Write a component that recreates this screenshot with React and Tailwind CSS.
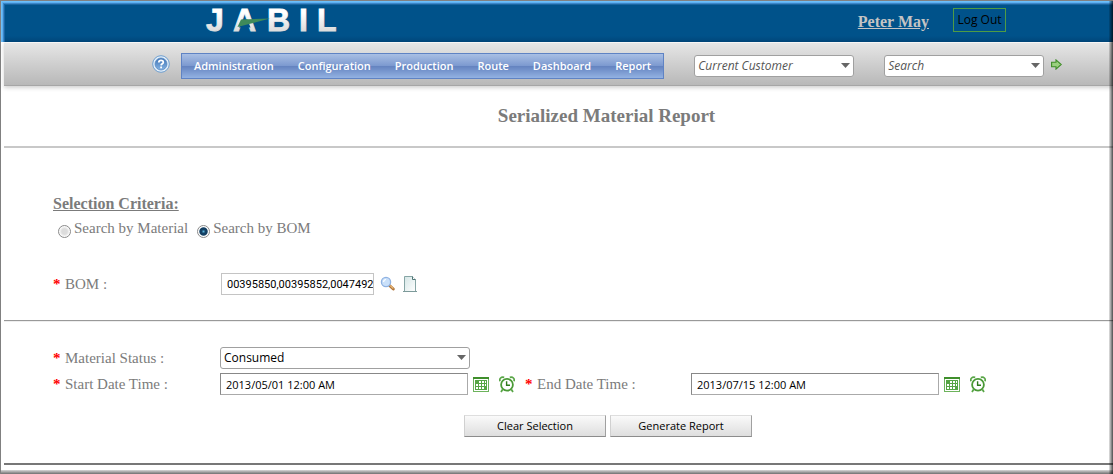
import React, { useState } from "react";

const ui = "font-['Open_Sans','Noto_Sans',sans-serif]";

const menu = ["Administration", "Configuration", "Production", "Route", "Dashboard", "Report"];

function Logo() {
  return (
    <svg width="138" height="32" viewBox="0 0 138 32" role="img" aria-label="Jabil">
      <defs>
        <linearGradient id="logoFill" gradientUnits="userSpaceOnUse" x1="0" y1="6" x2="0" y2="25">
          <stop offset="0" stopColor="#ffffff" />
          <stop offset="1" stopColor="#dadada" />
        </linearGradient>
      </defs>
      <text
        x="2 29 63 95 113"
        y="24"
        fill="url(#logoFill)"
        stroke="url(#logoFill)"
        strokeWidth="0.8"
        fontFamily="'Liberation Sans', sans-serif"
        fontWeight="700"
        fontSize="32"
      >
        JABIL
      </text>
      <path d="M38.5 12.5 L43.5 12.5 L46.5 20.5 L35 20.5 Z" fill="#00528a" />
      <path d="M37 12.5 L66 11.5 L33.5 20 Z" fill="#3f8a5a" />
    </svg>
  );
}

function HelpIcon() {
  return (
    <svg width="18" height="18" viewBox="0 0 18 18" aria-hidden="true">
      <defs>
        <linearGradient id="helpFill" x1="0" y1="0" x2="0" y2="1">
          <stop offset="0" stopColor="#3f73b5" />
          <stop offset="1" stopColor="#85b4e4" />
        </linearGradient>
      </defs>
      <circle cx="9" cy="9" r="8.3" fill="#e3effa" stroke="#6f9fd0" strokeWidth="1" />
      <circle cx="9" cy="9" r="6" fill="url(#helpFill)" stroke="#5b8ac2" strokeWidth="0.8" />
      <path d="M6.8 7.4 C6.8 4.6 11.3 4.7 11.3 7.2 C11.3 8.8 9.2 8.7 9.1 10.4" fill="none" stroke="#fff" strokeWidth="1.8" />
      <rect x="8.2" y="11.5" width="1.8" height="1.8" fill="#fff" />
    </svg>
  );
}

function SearchIcon() {
  return (
    <svg width="16" height="16" viewBox="0 0 16 16" aria-hidden="true">
      <path d="M9.5 9.5 L13.3 13" stroke="#b0763c" strokeWidth="3" strokeLinecap="round" />
      <path d="M10.5 9.8 L13 12.2" stroke="#e9b877" strokeWidth="1.2" strokeLinecap="round" />
      <circle cx="6" cy="6" r="4.6" fill="#c9e0fa" stroke="#8fb2e2" strokeWidth="1.3" />
      <path d="M3.6 6 A2.6 2.6 0 0 1 6 3.5" stroke="#fff" strokeWidth="1.2" fill="none" />
    </svg>
  );
}

function PageIcon() {
  return (
    <svg width="14" height="17" viewBox="0 0 14 17" aria-hidden="true">
      <defs>
        <linearGradient id="pageFill" x1="0" y1="0" x2="1" y2="1">
          <stop offset="0" stopColor="#d5e6e6" />
          <stop offset="1" stopColor="#ffffff" />
        </linearGradient>
      </defs>
      <path d="M1.5 0.5 H9.5 L12.5 3.5 V15.5 H1.5 Z" fill="url(#pageFill)" stroke="#86a5a5" />
      <path d="M9.5 0.5 V3.5 H12.5" fill="#fff" stroke="#4f7575" />
      <path d="M0 15.5 H14" stroke="#7d9a9a" />
    </svg>
  );
}

function CalendarIcon() {
  return (
    <svg width="16" height="15" viewBox="0 0 16 15" shapeRendering="crispEdges" aria-hidden="true">
      <rect x="0" y="0" width="16" height="15" fill="#6db35c" />
      <rect x="1" y="2" width="14" height="12" fill="#fff" />
      <rect x="0" y="0" width="16" height="2" fill="#3f8f2c" />
      <rect x="2" y="3" width="12" height="10" fill="#56a544" />
      {[
        [6, 4], [9, 4], [12, 4],
        [3, 7], [6, 7], [9, 7], [12, 7],
        [3, 10], [6, 10], [9, 10],
      ].map(([x, y]) => (
        <rect key={`${x}-${y}`} x={x} y={y} width={x === 12 ? 1 : 2} height="2" fill="#fff" />
      ))}
    </svg>
  );
}

function ClockIcon() {
  return (
    <svg width="16" height="17" viewBox="0 0 16 17" fill="none" aria-hidden="true">
      <path d="M1 5.3 C0.2 2.5 2 0.6 5.2 1.4" stroke="#5aa648" strokeWidth="1.7" />
      <path d="M15 5.3 C15.8 2.5 14 0.6 10.8 1.4" stroke="#5aa648" strokeWidth="1.7" />
      <path d="M3.6 13.6 L2 16 M12.4 13.6 L14 16" stroke="#5aa648" strokeWidth="1.8" />
      <circle cx="8" cy="8.8" r="5.9" fill="#fff" stroke="#4a9a36" strokeWidth="1.8" />
      <path d="M7.6 5.3 V9.3 H11" stroke="#2f7a1e" strokeWidth="1.4" />
    </svg>
  );
}

function GoIcon() {
  return (
    <svg width="11" height="11" viewBox="0 0 11 11" aria-hidden="true">
      <path d="M0.6 3.3 H5 V0.9 L10.2 5.5 L5 10.1 V7.7 H0.6 Z" fill="#9bd07f" stroke="#3d8c25" strokeWidth="1.1" />
    </svg>
  );
}

function Combo({ label, options, id, className, textClass }) {
  return (
    <div className={`relative h-[22px] ${className}`}>
      <select
        id={id}
        aria-label={label}
        className={`block h-full w-full appearance-none rounded-[3px] border border-[#a0a0a0] bg-white pl-[3px] pr-5 outline-none ${ui} ${textClass}`}
      >
        {options.map((o) => (
          <option key={o}>{o}</option>
        ))}
      </select>
      <svg className="pointer-events-none absolute right-1 top-2" width="9" height="5" viewBox="0 0 9 5" aria-hidden="true">
        <path d="M0 0 H9 L4.5 5 Z" fill="#666" />
      </svg>
    </div>
  );
}

function Label({ htmlFor, children, className }) {
  return (
    <label htmlFor={htmlFor} className={`flex shrink-0 gap-1 ${className}`}>
      <span className="w-2 font-bold text-[#ff0000]">*</span>
      {children}
    </label>
  );
}

function DateField({ id, label, value, className }) {
  return (
    <div className="flex items-center">
      <Label htmlFor={id} className={className}>{label}</Label>
      <input
        id={id}
        defaultValue={value}
        className={`h-[22px] w-[248px] border border-b-[#aaa] border-l-[#888] border-r-[#aaa] border-t-[#888] bg-white px-[5px] text-[11px] text-black outline-none ${ui}`}
      />
      <button type="button" aria-label={`${label} calendar`} className="ml-[5px] mt-px">
        <CalendarIcon />
      </button>
      <button type="button" aria-label={`${label} clock`} className="ml-[10px]">
        <ClockIcon />
      </button>
    </div>
  );
}

function Radio({ label, checked, onChange }) {
  return (
    <label className="flex items-center gap-[3px]">
      <input
        type="radio"
        name="mode"
        checked={checked}
        onChange={onChange}
        className="mt-1.5 h-[13px] w-[13px] appearance-none rounded-full border border-[#8a8a8a] bg-[radial-gradient(circle,#dcdcdc_0,#dcdcdc_35%,#fff_70%)] checked:bg-[radial-gradient(circle,#5ab4dc_0,#123f63_25%,#123f63_48%,#fff_60%)]"
      />
      {label}
    </label>
  );
}

const pushButton = `h-[22px] w-[142px] border border-b-[#8c8c8c] border-l-[#d0d0d0] border-r-[#a0a0a0] border-t-[#dedede] bg-linear-to-b from-[#fafafa] to-[#dedede] text-[11px] text-black ${ui}`;

export default function App() {
  const [mode, setMode] = useState("bom");

  return (
    <div className="relative flex min-h-screen flex-col border-l border-t border-[#808080] bg-white font-['Liberation_Serif',serif] text-[15px] leading-5 text-[#7b7b7b]">
      <header className="flex h-[41px] items-start bg-linear-to-b from-[#00528a] from-85% to-[#00467a] pl-[203px] pr-[107px] pt-1 shadow-[inset_1px_1px_0_#6cc0fa,inset_2px_2px_0_#5eb0f0,inset_3px_3px_0_#3a86c8,inset_4px_4px_0_#1a65a0]">
        <div className="mt-[2px]">
          <Logo />
        </div>
        <a href="#profile" className="ml-auto mt-[7px] text-[16px] font-bold text-[#c4c4c4] underline">Peter May</a>
        <button type="button" className={`ml-6 mt-[3px] h-6 w-[53px] border border-[#4f9b45] text-[12px] text-black ${ui}`}>
          Log Out
        </button>
      </header>

      <div className="ml-[3px] flex h-11 items-center border-b border-t border-b-[#a6a6a6] border-t-[#f6f6f6] bg-linear-to-b from-[#e6e6e6] to-[#b8b8b8] pl-[148px] shadow-[0_2px_4px_rgba(0,0,0,0.18)]">
        <button type="button" aria-label="Help">
          <HelpIcon />
        </button>
        <nav className={`ml-[11px] mt-1 flex h-[26px] items-center gap-6 border border-[#5f83c4] bg-[linear-gradient(#a9bfe4,#7d9ad0_48%,#6382bf_50%,#93b2e2)] px-3 text-[11px] font-semibold text-white ${ui}`}>
          {menu.map((m) => (
            <a key={m} href={`#${m.toLowerCase()}`}>{m}</a>
          ))}
        </nav>
        <Combo label="Current customer" options={["Current Customer"]} className="ml-[30px] mt-1 w-40" textClass="text-[12px] italic text-[#555]" />
        <Combo label="Search" options={["Search"]} className="ml-[30px] mt-1 w-40" textClass="text-[12px] italic text-[#555]" />
        <button type="button" aria-label="Go" className="ml-[7px]">
          <GoIcon />
        </button>
      </div>

      <main className="ml-[3px]">
        <h1 className="py-5 pl-24 text-center text-[19px] font-bold">Serialized Material Report</h1>
        <hr className="h-[2px] border-0 bg-[#c8c8c8]" />

        <section className="px-[49px] pb-[25px] pt-[46px]">
          <h2 className="text-[16px] font-bold underline">Selection Criteria:</h2>
          <div className="mt-1 flex gap-[9px] pl-[5px]">
            <Radio label="Search by Material" checked={mode === "material"} onChange={() => setMode("material")} />
            <Radio label="Search by BOM" checked={mode === "bom"} onChange={() => setMode("bom")} />
          </div>
          <div className="mt-[35px] flex items-center">
            <Label htmlFor="bom" className="w-[168px]">BOM :</Label>
            <input
              id="bom"
              defaultValue="00395850,00395852,00474920"
              className="h-[22px] w-[153px] border border-[#c4c4c4] bg-white pl-[5px] font-['Roboto',sans-serif] text-[11px] text-black outline-none"
            />
            <button type="button" aria-label="Find BOM" className="ml-[6px]">
              <SearchIcon />
            </button>
            <button type="button" aria-label="New list" className="ml-[7px]">
              <PageIcon />
            </button>
          </div>
        </section>

        <hr className="h-[2px] border-b border-t border-b-[#eee] border-t-[#999]" />

        <section className="px-[49px] pb-[26px] pt-[25px]">
          <div className="flex items-center">
            <Label htmlFor="status" className="w-[167px]">Material Status :</Label>
            <Combo id="status" label="Material Status" options={["Consumed"]} className="w-[250px]" textClass="text-[12px] text-black" />
          </div>
          <div className="mt-1 flex flex-wrap items-center gap-x-[10px]">
            <DateField id="start" label="Start Date Time :" value="2013/05/01 12:00 AM" className="w-[167px]" />
            <DateField id="end" label="End Date Time :" value="2013/07/15 12:00 AM" className="w-[166px]" />
          </div>
          <div className="mt-5 flex justify-center gap-1 pl-[99px]">
            <button type="button" className={pushButton}>Clear Selection</button>
            <button type="button" className={pushButton}>Generate Report</button>
          </div>
        </section>

        <hr className="h-[2px] border-0 bg-[#777]" />
      </main>

      <div className="mt-auto h-[4px] bg-linear-to-b from-[#d8d8d8] to-[#707070]" />
      <div className="pointer-events-none absolute inset-y-0 right-0 w-[4px] bg-linear-to-r from-black/10 to-black/70" />
    </div>
  );
}
